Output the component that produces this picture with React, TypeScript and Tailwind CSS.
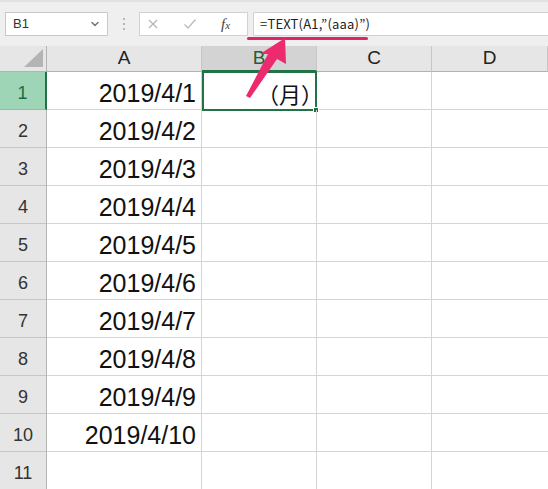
import { ChevronDown } from "lucide-react"

const cols = ["A", "B", "C", "D"]
const colWidths = ["w-[155px]", "w-[115px]", "w-[115px]", "w-[116px]"]
const rows = Array.from({ length: 11 }, (_, i) => i + 1)

function dateFor(row: number) {
  return row <= 10 ? `2019/4/${row}` : ""
}

export default function App() {
  return (
    <main className="relative w-[548px] h-[489px] overflow-hidden bg-white font-['Liberation_Sans','Noto_Sans_CJK_JP',sans-serif]">
      {/* formula bar */}
      <div className="h-[46px] bg-[#efefef] border-t-2 border-[#e2e2e2] flex items-start pt-[10px] pl-[5px]">
        <div className="w-[103px] h-[24px] bg-white border border-[#c8c8c8] flex items-center justify-between pl-[7px] pr-[6px] text-[13px] text-[#333]">
          <span>B1</span>
          <ChevronDown className="w-3 h-3 text-[#777]" strokeWidth={3} />
        </div>
        <div className="w-[31px] h-[24px] flex flex-col items-center justify-center gap-[3px]">
          <span className="w-[2px] h-[2px] bg-[#b8b8b8]" />
          <span className="w-[2px] h-[2px] bg-[#b8b8b8]" />
          <span className="w-[2px] h-[2px] bg-[#b8b8b8]" />
        </div>
        <div className="w-[109px] h-[24px] bg-white border border-[#d2d2d2] flex items-center text-[#bdbdbd]">
          <svg width="12" height="12" viewBox="0 0 12 12" className="ml-[7px]">
            <path d="M2 2L10 10M10 2L2 10" stroke="#b5b5b5" strokeWidth="1.3" />
          </svg>
          <svg width="14" height="12" viewBox="0 0 14 12" className="ml-[24px]">
            <path d="M1.5 6.5L5 10L12.5 1.5" stroke="#bdbdbd" strokeWidth="1.4" fill="none" />
          </svg>
          <span className="ml-[24px] italic text-[15px] text-[#444] font-['Liberation_Serif',serif]">
            f<span className="text-[11px]">x</span>
          </span>
        </div>
        <div className="ml-[5px] flex-1 h-[24px] bg-white border border-[#d2d2d2] border-r-0 flex items-center pl-[6px] text-[13px] text-[#222] tracking-[0.2px] font-['Noto_Sans_CJK_JP',sans-serif]">
          =TEXT(A1,”(aaa)”)
        </div>
      </div>

      {/* sheet */}
      <div className="flex flex-col">
        <div className="flex h-[26px]">
          <div className="w-[47px] shrink-0 bg-[#e6e6e6] border-r border-b border-[#b3b3b3] relative">
            <div className="absolute right-[3px] bottom-[4px] w-0 h-0 border-l-[19px] border-l-transparent border-b-[18px] border-b-[#b4b4b4]" />
          </div>
          {cols.map((c, i) => (
            <div
              key={c}
              className={`${colWidths[i]} shrink-0 flex items-center justify-center text-[19px] border-r border-[#c6c6c6] ${
                c === "B"
                  ? "bg-[#d3d3d3] border-b-2 border-b-[#217346] text-[#1e5e3a]"
                  : "bg-[#e6e6e6] border-b border-b-[#b3b3b3] text-[#222]"
              }`}
            >
              {c}
            </div>
          ))}
        </div>

        {rows.map((r) => (
          <div key={r} className="flex h-[38px]">
            <div
              className={`w-[47px] shrink-0 flex items-end justify-center pb-[2px] text-[18px] border-b ${
                r === 1
                  ? "bg-[#9fd5b7] text-[#1e6b40] border-r-2 border-r-[#217346] border-b-[#8bbf9f]"
                  : "bg-[#e6e6e6] text-[#333] border-r border-r-[#b3b3b3] border-b-[#c6c6c6]"
              }`}
            >
              {r}
            </div>
            <div className="w-[155px] shrink-0 border-r border-b border-[#d4d4d4] flex items-end justify-end pr-[5px] pb-[3px] text-[25px] text-[#111] leading-none">
              {dateFor(r)}
            </div>
            <div
              className={`w-[115px] shrink-0 relative flex items-center justify-end text-[22px] text-[#111] ${
                r === 1 ? "border-2 border-[#217346] -mt-[1px] h-[40px] pr-0" : "border-r border-b border-[#d4d4d4]"
              }`}
            >
              {r === 1 && (
                <>
                  <span className="font-['Noto_Sans_CJK_JP',sans-serif] mr-[-8px] pt-[3px] leading-none">（月）</span>
                  <span className="absolute -right-[4px] -bottom-[4px] w-[6px] h-[6px] bg-[#217346] border border-white" />
                </>
              )}
            </div>
            <div className="w-[115px] shrink-0 border-r border-b border-[#d4d4d4]" />
            <div className="w-[116px] shrink-0 border-b border-[#d4d4d4]" />
          </div>
        ))}
      </div>

      {/* annotation: underline + arrow */}
      <div className="absolute left-[247px] top-[37px] w-[121px] h-[3px] rounded-full bg-[#e0256a]" />
      <svg className="absolute left-0 top-0 pointer-events-none" width="548" height="489">
        <polygon points="285,38 286,64 277,59 250,98 246,96 268,54 260,54" fill="#ec2a6d" />
      </svg>
    </main>
  )
}
